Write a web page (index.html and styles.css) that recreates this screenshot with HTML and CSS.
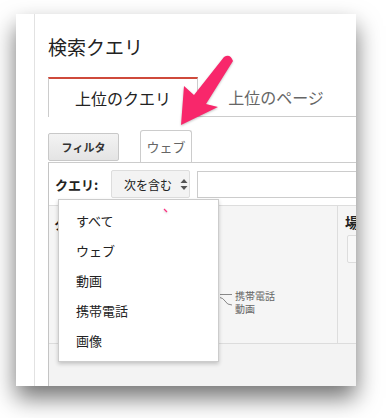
FILE: index.html
```html
<!DOCTYPE html>
<html lang="ja">
  <head>
    <meta charset="UTF-8" />
    <title>検索クエリ</title>
    <link rel="stylesheet" href="styles.css">
  </head>
  <body>
    <div class="window">
      <div class="gutter"></div>
      <div class="main">
        <h1 class="title">検索クエリ</h1>

        <!-- タブ -->
        <div class="tabs">
          <div class="tab active">上位のクエリ</div>
          <div class="tab-rest">
            <div class="tab">上位のページ</div>
          </div>
        </div>

        <div class="toolbar">
          <button class="filter-btn">フィルタ</button>
          <div class="web-tab">ウェブ</div>
        </div>

        <div class="panel">
          <div class="filter-row">
            <span class="filter-label">クエリ:</span>
            <div class="select"><span class="select-text">次を含む</span><span class="select-arrows">
              <svg width="8" height="13" viewBox="0 0 8 13"><path d="M4 1 L7.5 5 H0.5 Z M4 12 L7.5 8 H0.5 Z" fill="#555"/></svg>
            </span></div>
            <div class="text-input"></div>
          </div>

          <div class="grid">
            <div class="cell-left">
              <span class="col-head">ク</span>
              <svg class="chart-lines" width="16" height="20" viewBox="0 0 16 20">
                <path d="M0 3.5 H12" stroke="#888" fill="none"/>
                <path d="M0 6.5 Q3 7 5 10 Q7 14 12 14" stroke="#888" fill="none"/>
              </svg>
              <div class="chart-label">携帯電話<br>動画</div>
            </div>
            <div class="cell-right">
              <div class="col-head-right">場所</div>
              <div class="mini-box"></div>
            </div>
          </div>
          <div class="below"></div>

          <!-- ドロップダウン -->
          <ul class="menu">
            <li>すべて</li>
            <li>ウェブ</li>
            <li>動画</li>
            <li>携帯電話</li>
            <li>画像</li>
          </ul>
        </div>
      </div>
    </div>

    <!-- 矢印 -->
    <svg class="arrow" width="386" height="418" viewBox="0 0 386 418">
      <path d="M181 125 L184 86 L194 95 L224 57 Q230 53 233 61 L206 104 L218 107 Z" fill="#f8276b"/>
      <path d="M164 209 L167 212" stroke="#f06" stroke-width="1.3" opacity="0.8"/>
    </svg>
  </body>
</html>
```

FILE: styles.css
```css
body {
  margin: 0;
  width: 386px;
  height: 418px;
  position: relative;
  overflow: hidden;
  background: #fff;
  font-family: "Noto Sans CJK JP", "Noto Sans", sans-serif;
  color: #222;
}

/* ウィンドウ */
.window {
  position: relative;
  margin: 14px 0 0 16px;
  width: 340px;
  height: 372px;
  background: #fff;
  display: flex;
  overflow: hidden;
  box-shadow: 0 12px 22px rgba(0, 0, 0, 0.55);
}

.gutter {
  flex: none;
  width: 18px;
  border-right: 1px solid #e2e2e2;
}

.main {
  flex: 1;
  min-width: 0;
  padding-left: 13px;
  display: flex;
  flex-direction: column;
}

.title {
  margin: 0;
  padding-top: 20px;
  font-size: 19px;
  line-height: 26px;
  font-weight: normal;
  color: #222;
}

/* タブ */
.tabs {
  display: flex;
  margin-top: 17px;
  height: 40px;
}

.tab {
  display: flex;
  align-items: center;
  justify-content: center;
  font-size: 16px;
  color: #666;
  width: 156px;
  height: 39px;
}

.tab.active {
  box-sizing: border-box;
  width: 150px;
  height: 40px;
  border-top: 2px solid #cf4a3b;
  border-left: 1px solid #ccc;
  border-right: 1px solid #ccc;
  color: #222;
  padding-bottom: 1px;
}

.tab-rest {
  flex: 1;
  border-bottom: 1px solid #ccc;
}

/* ツールバー */
.toolbar {
  display: flex;
  align-items: flex-end;
  margin-top: 13px;
  height: 32px;
}

.filter-btn {
  box-sizing: border-box;
  width: 71px;
  height: 28px;
  margin: 0 0 1px 0;
  padding: 0;
  border: 1px solid #c8c8c8;
  border-radius: 2px;
  background: linear-gradient(#f3f3f3, #e4e4e4);
  font-family: inherit;
  font-size: 11px;
  font-weight: bold;
  color: #333;
}

.web-tab {
  box-sizing: border-box;
  margin-left: 21px;
  width: 52px;
  height: 32px;
  border: 1px solid #ccc;
  border-bottom: none;
  border-radius: 3px 3px 0 0;
  background: #fff;
  display: flex;
  align-items: center;
  justify-content: center;
  font-size: 13px;
  color: #666;
}

/* パネル */
.panel {
  flex: 1;
  position: relative;
  border-top: 1px solid #ccc;
  border-left: 1px solid #c4c4c4;
  display: flex;
  flex-direction: column;
}

.filter-row {
  height: 42px;
  display: flex;
  align-items: center;
  padding-left: 6px;
  border-bottom: 1px solid #ddd;
}

.filter-label {
  width: 56px;
  font-size: 13px;
  font-weight: bold;
  color: #222;
}

.select {
  box-sizing: border-box;
  flex: none;
  width: 79px;
  height: 28px;
  padding-left: 12px;
  border: 1px solid #ddd;
  border-radius: 2px;
  background: #f3f3f3;
  display: flex;
  align-items: center;
  white-space: nowrap;
  font-size: 12px;
  color: #222;
}

.select-arrows {
  margin-left: 8px;
  display: flex;
}

.text-input {
  box-sizing: border-box;
  margin-left: 7px;
  flex: 1;
  height: 27px;
  border: 1px solid #ccc;
  border-right: none;
  background: #fff;
}

.grid {
  height: 137px;
  display: flex;
  background: #f5f5f5;
  border-bottom: 1px solid #dcdcdc;
}

.cell-left {
  position: relative;
  width: 288px;
  flex: none;
  border-right: 1px solid #ddd;
}

.col-head {
  position: absolute;
  left: 5px;
  top: 8px;
  font-size: 13px;
  font-weight: bold;
}

.chart-lines {
  position: absolute;
  left: 171px;
  top: 85px;
}

.chart-label {
  position: absolute;
  left: 186px;
  top: 83px;
  font-size: 10px;
  line-height: 13px;
  color: #666;
}

.cell-right {
  flex: 1;
  padding: 7px 0 0 7px;
  white-space: nowrap;
}

.col-head-right {
  font-size: 14px;
  line-height: 18px;
  font-weight: bold;
}

.mini-box {
  box-sizing: border-box;
  margin: 4px 0 0 2px;
  width: 40px;
  height: 28px;
  border: 1px solid #ddd;
  border-radius: 2px;
  background: #f8f8f8;
}

.below {
  flex: 1;
  background: #f3f3f3;
}

/* ドロップダウン */
.menu {
  position: absolute;
  left: 9px;
  top: 36px;
  box-sizing: border-box;
  width: 161px;
  height: 163px;
  margin: 0;
  padding: 6px 0 0 0;
  list-style: none;
  background: #fff;
  border: 1px solid #ccc;
  box-shadow: 0 2px 4px rgba(0, 0, 0, 0.2);
}

.menu li {
  height: 30px;
  line-height: 30px;
  padding-left: 17px;
  font-size: 13px;
  color: #222;
}

/* 矢印 */
.arrow {
  position: absolute;
  top: 0;
  left: 0;
  filter: drop-shadow(0 1px 1px rgba(0, 0, 0, 0.25));
}
```
